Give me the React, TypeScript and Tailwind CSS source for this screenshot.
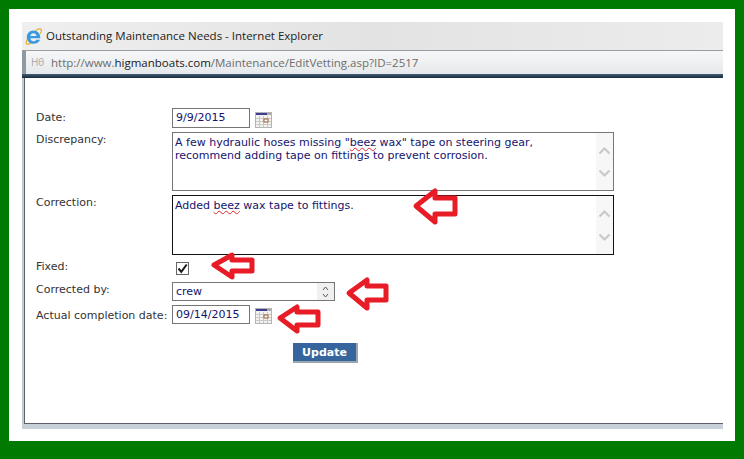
import React from 'react';

const verdana = "font-['DejaVu_Sans','Liberation_Sans',sans-serif]";

const CalendarIcon = () => (
  <svg width="17" height="16" viewBox="0 0 17 16" className="mt-[3px] shrink-0">
    <rect x="0.5" y="0.5" width="16" height="15" fill="#f4f2ee" stroke="#b4b4b4" />
    <rect x="1" y="1" width="11" height="2" fill="#3c3f8f" />
    <rect x="12" y="1" width="4" height="2" fill="#a9a9a9" />
    <path d="M1 6.5h15M1 9.5h15M1 12.5h15M4.5 4v11M8.5 4v11M12.5 4v11" stroke="#c9c9c9" fill="none" />
    <rect x="9" y="7" width="4" height="3" fill="#fff" stroke="#9a5a3a" />
  </svg>
);

const IeIcon = () => (
  <svg width="17" height="17" viewBox="0 0 17 17" className="shrink-0">
    <path d="M2.200 11.500C.4 14.800 1 16.600 3.200 16.200c1.100-.2 2.300-.8 3.600-1.700" fill="none" stroke="#e5ad2e" strokeWidth="1.200" />
    <path d="M10.500 2.700C13 .9 15.500.2 16.200 1.500c.5 1-.1 2.700-1.300 4.500" fill="none" stroke="#e5ad2e" strokeWidth="1.200" />
    <path d="M15.300 10.300H5.400c.1 1.800 1.400 3 3.100 3 1.200 0 2.200-.6 2.700-1.600h3.800c-.9 2.500-3.500 4.100-6.500 4.100-3.700 0-6.700-2.700-6.700-6.500 0-3.900 3-6.700 6.700-6.700 3.900 0 6.900 3 6.800 7.700zM5.400 8h6.100C11.300 6.400 10.100 5.300 8.500 5.300S5.600 6.400 5.400 8z" fill="#3a9ae0" />
  </svg>
);

const ScrollArrows = () => (
  <div className="flex w-[17px] shrink-0 flex-col items-center justify-between bg-[#f7f7f7] pt-[14px] pb-[13px]">
    <svg width="13" height="8" viewBox="0 0 13 8"><path d="M1.500 6.500 6.500 1.500l5 5" fill="none" stroke="#c6c9c9" strokeWidth="2" /></svg>
    <svg width="13" height="8" viewBox="0 0 13 8"><path d="M1.500 1.500l5 5 5-5" fill="none" stroke="#c6c9c9" strokeWidth="2" /></svg>
  </div>
);

const Squiggle = ({ children }: { children: React.ReactNode }) => (
  <span className="underline decoration-wavy decoration-[#e0252b] decoration-1 underline-offset-1">{children}</span>
);

const Row = ({ label, className, labelClass, children }: { label: string; className?: string; labelClass?: string; children: React.ReactNode }) => (
  <div className={`flex items-start ${className || ''}`}>
    <div className={`w-[136px] shrink-0 text-[11px] leading-[13px] text-[#333] ${labelClass || ''}`}>{label}</div>
    {children}
  </div>
);

const arrows = [
  '416,206 435,191 435,198 455,198 455,214 435,214 435,222',
  '214,265 232,255 232,260 252,260 252,271 232,271 232,277',
  '349,293 367,280 367,286 386,286 386,300 367,300 367,308',
  '280,318 297,307 297,312 318,312 318,325 297,325 297,331',
];

export default function App() {
  return (
    <div className={`relative h-[459px] w-[744px] overflow-hidden border-x-[9px] border-t-[9px] border-b-[18px] border-[#007a00] bg-white pl-[13px] pr-[12px] pt-[13px] ${verdana}`}>
      <div className="flex h-[407px] flex-col">
        {/* IE title */}
        <div className="flex h-[29px] items-center gap-[4px] border-b border-[#9c9c9c] bg-gradient-to-r from-[#efefef] via-[#e3e3e3] to-[#ececec] pl-[3px] font-['Open_Sans',sans-serif] text-[11.5px] text-[#222]">
          <IeIcon />
          <span>Outstanding Maintenance Needs - Internet Explorer</span>
        </div>
        {/* address bar */}
        <div className="flex h-[23px] items-center gap-[4px] border-l-[4px] border-[#8d99a3] bg-gradient-to-b from-[#f6f7f8] to-[#e6e9eb] pl-[5px] font-['Open_Sans',sans-serif] text-[11.5px] text-[#6d6d6d]">
          <span className="w-[16px] text-[10px] text-[#a8a8a8]">Hθ</span>
          <span>http://www.<span className="text-[#1a1a1a]">higmanboats.com</span>/Maintenance/EditVetting.asp?ID=2517</span>
        </div>
        <div className="h-[4px] bg-gradient-to-b from-[#3f5f77] to-[#1a2a3a]" />
        {/* page */}
        <div className="flex flex-1 flex-col border-l-2 border-l-[#c5cbd0]">
          <div className="flex flex-1 flex-col border-l border-l-[#5c6068] bg-white pl-[11px] pt-[30px] text-[11px]">
            <Row label="Date:" labelClass="pt-[3px]">
              <div className="flex items-center gap-[5px]">
                <div className="flex h-[20px] w-[78px] items-center border border-[#767676] pl-[3px] pt-[1px] text-[#14146e]">9/9/2015</div>
                <CalendarIcon />
              </div>
            </Row>
            <Row label="Discrepancy:" className="mt-[4px]" labelClass="pt-px">
              <div className="flex h-[59px] w-[442px] border border-[#767676]">
                <div className="flex-1 pl-[2px] pt-[3px] leading-[13px] text-[#14146e]">
                  A few hydraulic hoses missing "<Squiggle>beez</Squiggle> wax" tape on steering gear,<br />
                  recommend adding tape on fittings to prevent corrosion.
                </div>
                <ScrollArrows />
              </div>
            </Row>
            <Row label="Correction:" className="mt-[4px]" labelClass="pt-px">
              <div className="flex h-[60px] w-[442px] border border-[#111]">
                <div className="flex-1 pl-[2px] pt-[3px] leading-[13px] text-[#14146e]">
                  Added <Squiggle>beez</Squiggle> wax tape to fittings.
                </div>
                <ScrollArrows />
              </div>
            </Row>
            <Row label="Fixed:" className="mt-[5px]">
              <div className="ml-[4px] mt-[2px] flex h-[13px] w-[13px] items-center justify-center border border-[#666] bg-white">
                <svg width="11" height="11" viewBox="0 0 11 11"><path d="M1.500 5.500 4.300 8.800 9.700 1.500" fill="none" stroke="#1a1a1a" strokeWidth="2" /></svg>
              </div>
            </Row>
            <Row label="Corrected by:" className="mt-[7px]" labelClass="pt-px">
              <div className="flex h-[19px] w-[163px] items-center justify-between border border-[#767676] pl-[3px] text-[#14146e]">
                <span className="pt-px">crew</span>
                <div className="flex h-full w-[17px] flex-col items-center justify-center gap-[2px] bg-[#f0f0f0]">
                  <svg width="7" height="5" viewBox="0 0 7 5"><path d="M1 4l2.500-3L6 4" fill="none" stroke="#555" /></svg>
                  <svg width="7" height="5" viewBox="0 0 7 5"><path d="M1 1l2.500 3L6 1" fill="none" stroke="#555" /></svg>
                </div>
              </div>
            </Row>
            <Row label="Actual completion date:" className="mt-[4px]" labelClass="pt-[4px]">
              <div className="flex items-center gap-[5px]">
                <div className="flex h-[19px] w-[78px] items-center border border-[#767676] pl-[3px] pt-[1px] text-[#14146e]">09/14/2015</div>
                <CalendarIcon />
              </div>
            </Row>
            <div className="ml-[257px] mt-[19px]">
              <button className="h-[20px] w-[65px] border-r-2 border-b-2 border-[#9aa5ad] bg-[#35659c] pt-[2px] text-[11px] font-bold text-white">Update</button>
            </div>
            <div className="flex-1" />
            <div className="-ml-[11px] h-px bg-[#5c6068]" />
          </div>
        </div>
        <div className="h-[5px] bg-[#c7d0d8]" />
      </div>
      {/* red annotation arrows */}
      <svg className="pointer-events-none absolute left-[-9px] top-[-9px]" width="744" height="459" viewBox="0 0 744 459">
        {arrows.map((p) => (
          <polygon key={p} points={p} fill="none" stroke="#e81c26" strokeWidth="5" strokeLinejoin="round" />
        ))}
      </svg>
    </div>
  );
}
